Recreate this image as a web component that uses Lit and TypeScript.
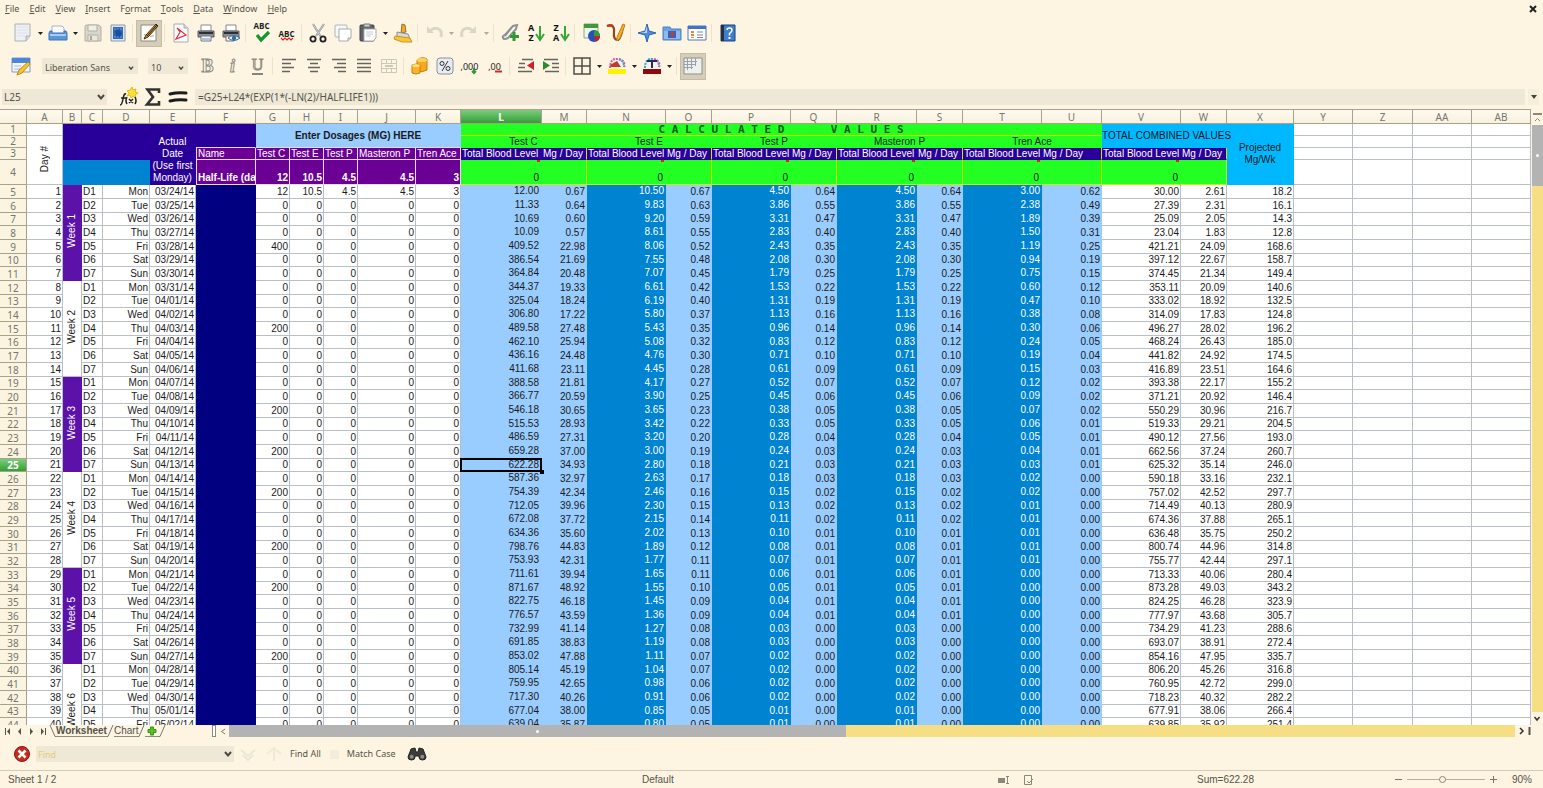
import { LitElement, html, css, svg, nothing, type TemplateResult } from "lit";
import { customElement, property } from "lit/decorators.js";
import { classMap } from "lit/directives/class-map.js";

/* ---------- icons (20 x 20 grid) ---------- */
const ICONS: Record<string, TemplateResult> = {
  newdoc: svg`<path d="M2 1h15v12l-4 5H2z" fill="#eef1f4" stroke="#a9b0b8"/><path d="M17 13h-4v5" fill="#cfd6dd" stroke="#a9b0b8"/><path d="M4 4h11M4 7h11M4 10h11M4 13h8" stroke="#dbe1e7"/>`,
  open: svg`<path d="M4 9V3h10l2 2v4" fill="#fff" stroke="#9fb4cc"/><path d="M2 8h2v2h12V8h2l1 2v7H1v-7z" fill="#5b95dc" stroke="#3c74bd"/><path d="M2 12h16" stroke="#a8cbf3" stroke-width="2"/>`,
  save: svg`<path d="M3 2h13l2 2v14H2V3z" fill="#d8d6cc" stroke="#b3b0a5"/><path d="M5 2h9v6H5z" fill="#efede4" stroke="#b3b0a5"/><path d="M5 12h10v6H5z" fill="#e8e6dd" stroke="#b3b0a5"/><path d="M7 13h2v4H7z" fill="#aaa79c"/>`,
  bluedoc: svg`<path d="M3 2h14v16H3z" fill="#dfe6ee" stroke="#8d98a8"/><path d="M5 4h10v12H5z" fill="#2f69bd"/><path d="M6 6h8M6 14h8" stroke="#6ea0e6" stroke-dasharray="2 1"/><path d="M7 8l4-2 3 4-2 4-4-1z" fill="#1e4f9e"/>`,
  edit: svg`<path d="M2 2h15v16H2z" fill="#fdfdf8" stroke="#8b8b80"/><path d="M5 11c2 3 3-2 5 1s3 0 5 1" fill="none" stroke="#999"/><path d="M17 1l2 2L9 14l-4 2 2-4z" fill="#d8961e" stroke="#3b2a10"/><path d="M18 2L8 13" stroke="#222"/>`,
  pdf: svg`<path d="M3 1h10l4 4v14H3z" fill="#fbfbfb" stroke="#aaa"/><path d="M13 1v4h4" fill="#ddd" stroke="#aaa"/><path d="M6 5l9 7-10 4 4-7z" fill="none" stroke="#e03040" stroke-width="1.200"/>`,
  print: svg`<path d="M5 2h10v6H5z" fill="#fff" stroke="#888"/><path d="M2 8h16v6H2z" fill="#8a9099" stroke="#555b63"/><path d="M3 10h14" stroke="#2c3036" stroke-width="2"/><path d="M5 13h10v5H5z" fill="#f5f7fb" stroke="#777"/><path d="M6 16h8" stroke="#5c8fd6"/>`,
  preview: svg`<path d="M5 2h10v6H5z" fill="#fff" stroke="#888"/><path d="M2 8h16v6H2z" fill="#8a9099" stroke="#555b63"/><path d="M3 10h14" stroke="#2c3036" stroke-width="2"/><path d="M5 13h8v5H5z" fill="#f5f7fb" stroke="#777"/><path d="M7 15q5-5 12 0q-6 5-12 0z" fill="#e4eef8" stroke="#39698f"/><circle cx="13" cy="15" r="2.2" fill="#2f6ea8"/>`,
  spell: svg`<path d="M5 12l4 5 8-8" fill="none" stroke="#18962f" stroke-width="3.2"/>`,
  autospell: svg`<path d="M4 15l2 2 2-2 2 2 2-2 2 2 2-2" fill="none" stroke="#e02020" stroke-width="1.2"/>`,
  cut: svg`<path d="M5 1l8 13M16 1L8 13" stroke="#8a8f96" stroke-width="2"/><path d="M5 1l8 13M16 1L8 13" stroke="#d9dde2" stroke-width=".8"/><circle cx="5" cy="16" r="2.6" fill="none" stroke="#222" stroke-width="1.8"/><circle cx="15" cy="16" r="2.6" fill="none" stroke="#222" stroke-width="1.8"/>`,
  copy: svg`<rect x="2" y="2" width="12" height="12" rx="1" fill="#f6f7f8" stroke="#b0b4b9"/><path d="M6 6h12v9l-3 3H6z" fill="#fff" stroke="#a7abb1"/><path d="M18 15h-3v3" fill="#ddd" stroke="#a7abb1"/>`,
  paste: svg`<rect x="2" y="2" width="14" height="16" rx="1" fill="#5d6168" stroke="#3e4147"/><path d="M6 1h6v3H6z" fill="#c9ccd1" stroke="#777"/><path d="M6 6h12v9l-3 3H6z" fill="#fff" stroke="#a7abb1"/><path d="M8 9h7M8 11h7M8 13h5" stroke="#c5c9ce"/>`,
  brush: svg`<path d="M9 1l3 1 1 7-5 1z" fill="#e6a93a" stroke="#a96f17"/><path d="M4 9l11 2 2 5-13-2z" fill="#d4d8df" stroke="#8a8f98"/><path d="M2 13l15 2 2 4H9L1 16z" fill="#f5c53b" stroke="#d29616"/>`,
  undo: svg`<path d="M3 3v7h7z" fill="#dad6c8"/><path d="M6 8q5-5 10-1 2 2 1 7" fill="none" stroke="#dad6c8" stroke-width="3"/>`,
  redo: svg`<path d="M17 3v7h-7z" fill="#dad6c8"/><path d="M14 8Q9 3 4 7q-2 2-1 7" fill="none" stroke="#dad6c8" stroke-width="3"/>`,
  link: svg`<path d="M5 13l8-10 4-1-1 4-8 9q-4 2-5 0t2-3l7-8" fill="none" stroke="#8c9198" stroke-width="2"/><path d="M14 9v9M10 13.500h9" stroke="#2f9a35" stroke-width="3"/>`,
  arrowdown: svg`<path d="M15 3v13M11 11l4 6 4-6" fill="none" stroke="#35a83b" stroke-width="2"/>`,
  chart: svg`<path d="M3 1h14v14H3z" fill="#eef6ea" stroke="#8ca886"/><path d="M3 1h14v4H3z" fill="#3e9a3a"/><circle cx="13" cy="13" r="6" fill="#2a50b8"/><path d="M13 13V7a6 6 0 0 1 6 6z" fill="#2f9e3b"/><path d="M13 13h6a6 6 0 0 1-4 5.600z" fill="#c8232b"/>`,
  draw: svg`<path d="M1 3q8-2 7 6t4 8q4-3 5-15" fill="none" stroke="#8f4a1c" stroke-width="2.200"/><path d="M17 1l2 1-5 13-3 3v-4z" fill="#f4b22f" stroke="#c77b12"/><path d="M1 3q4-2 6 0" stroke="#c43a1d" stroke-width="2" fill="none"/>`,
  navigator: svg`<path d="M10 1l2 7 7 2-7 2-2 7-2-7-7-2 7-2z" fill="#4c8fe0" stroke="#2a62b4"/><path d="M10 3v7H3l5-1z" fill="#b9d6f8"/>`,
  gallery: svg`<path d="M1 4h7l1 2h10v11H1z" fill="#6ba1e4" stroke="#4a80c8"/><path d="M2 8h16v8H2z" fill="#8dbaf0"/><path d="M6 8h8v7H6z" fill="#3f62a8"/><path d="M9 9h3v5H9z" fill="#b3404a"/>`,
  sources: svg`<path d="M1 3h18v14H1z" fill="#fdfdfd" stroke="#5379b8"/><path d="M1 3h18v3H1z" fill="#3f73c6"/><path d="M4 8h3v2H4zM4 11h3v2H4zM4 14h3v1H4z" fill="#e08c2c"/><path d="M10 9h6M10 12h6M10 14.500h6" stroke="#7a8ba8"/>`,
  help: svg`<path d="M3 2h14v16H3z" fill="#3f7fcf" stroke="#1d3f73"/><path d="M3 2h3v16H3z" fill="#26303e"/><path d="M9 7q0-2 2.500-2t2.500 2q0 2-2.500 3.500v2" fill="none" stroke="#fff" stroke-width="1.500"/><path d="M10.500 14h2v2h-2z" fill="#fff"/>`,
  styles: svg`<path d="M1 2h18v14H1z" fill="#f4f8fd" stroke="#7d9cc8"/><path d="M1 2h18v5H1z" fill="#4c86d8"/><path d="M3 10h7M3 13h6" stroke="#a9bad3"/><path d="M17 6l2 2-8 9-5 2 2-5z" fill="#f7c42c" stroke="#c58b10"/>`,
  alignl: svg`<path d="M3 3.500h14M3 7.500h9M3 11.500h12M3 15.500h8" stroke="#66645c" stroke-width="1.500"/>`,
  alignc: svg`<path d="M3 3.500h14M6 7.500h8M4 11.500h12M6 15.500h8" stroke="#66645c" stroke-width="1.500"/>`,
  alignr: svg`<path d="M3 3.500h14M8 7.500h9M5 11.500h12M9 15.500h8" stroke="#66645c" stroke-width="1.500"/>`,
  alignj: svg`<path d="M3 3.500h14M3 7.500h14M3 11.500h14M3 15.500h14" stroke="#66645c" stroke-width="1.500"/>`,
  merge: svg`<path d="M2.500 3.500h15v13h-15zM2.500 7.500h15M2.500 12.500h15M7.500 3.500v4M12.500 3.500v4M7.500 12.500v4M12.500 12.500v4" fill="none" stroke="#cbc7ba"/><path d="M6 10h8" stroke="#cbc7ba" stroke-width="2"/>`,
  coins: svg`<path d="M7 4q5-4 10-1v11q-5 3-10 1z" fill="#f5a91e" stroke="#c97c0c"/><ellipse cx="12" cy="4" rx="5" ry="2" fill="#ffd257"/><path d="M2 9q4-2 8 0v8q-4 2-8 0z" fill="#f8b52c" stroke="#c97c0c"/><ellipse cx="6" cy="9.500" rx="4" ry="1.600" fill="#ffdc74"/>`,
  percent: svg`<rect x="2" y="2" width="16" height="16" rx="3" fill="#e9ecf2" stroke="#8b909b"/><circle cx="7" cy="7.500" r="2" fill="none" stroke="#333"/><circle cx="13" cy="12.500" r="2" fill="none" stroke="#333"/><path d="M13 5L7 15" stroke="#333"/>`,
  adddec: svg`<path d="M14 12v5M12 15l2 2 2-2" stroke="#2f9a35" stroke-width="2" fill="none"/>`,
  remdec: svg`<path d="M10 15.500h7" stroke="#d02a2a" stroke-width="2"/>`,
  outdent: svg`<path d="M6 3.500h11M3 7.500h6M2 11.500h7M2 15.500h14" stroke="#66645c" stroke-width="1.500"/><path d="M18 5v9l-7-4.500z" fill="#cf2027"/>`,
  indent: svg`<path d="M3 3.500h14M11 7.500h7M11 11.500h7M4 15.500h14" stroke="#66645c" stroke-width="1.500"/><path d="M2 5v9l7-4.500z" fill="#2e8b32"/>`,
  borders: svg`<path d="M2 2h16v16H2zM10 2v16M2 10h16" fill="none" stroke="#4d4d48" stroke-width="1.500"/>`,
  bgcolor: svg`<path d="M3 12q0-10 8-9t6 9" fill="#f3f3ee" stroke="#e05a9b" stroke-width="2" stroke-dasharray="2 1"/><path d="M3 9l7-4 4 6H4z" fill="#c23a2a"/><path d="M12 3q5 2 5 8" fill="none" stroke="#3aa0d8" stroke-width="2" stroke-dasharray="2 1"/><path d="M1 13h18v5H1z" fill="#fff200"/>`,
  fontcolor: svg`<path d="M3 12q0-10 8-9t6 9" fill="#f3f3ee" stroke="#3aa0d8" stroke-width="2" stroke-dasharray="2 1"/><path d="M12 3q5 2 5 8" fill="none" stroke="#e05a9b" stroke-width="2" stroke-dasharray="2 1"/><path d="M5 5h10M10 5v7" stroke="#222e55" stroke-width="2"/><path d="M1 13h18v5H1z" fill="#8b0a10"/>`,
  gridlines: svg`<path d="M1 2h18v16H1z" fill="#eef0ee" stroke="#8d9090"/><path d="M1 5.500h13M1 8.500h12M1 11.500h9M4.500 2v12M8.500 2v11M12.500 2v8" stroke="#9aa0a6"/>`,
  fx: svg`<path d="M14 0l1 3 3-1-1 3 3 1-3 2 1 3-3-2-2 2-1-3-3 1 2-3-2-2 3-1z" fill="#ffdf3a" stroke="#e8b818"/><path d="M2 18q2 0 3-6t3-5M3 11h5M9 10q-2 4 0 7M11 12l4 4M15 12l-4 4M17 10q2 4 0 7" fill="none" stroke="#222" stroke-width="1.500"/>`,
  sigma: svg`<path d="M16 6V2.500H4.500L10 10l-6 7.500h12V14" fill="none" stroke="#333" stroke-width="2.600"/>`,
  equals: svg`<path d="M2 7q8-2 16-1M2 14q8-2 16-1" fill="none" stroke="#1c1c1c" stroke-width="3" stroke-linecap="round"/>`,
  closefind: svg`<circle cx="10" cy="10" r="7.500" fill="#c82a20" stroke="#8a1710"/><path d="M6.500 6.500l7 7M13.500 6.500l-7 7" stroke="#fff" stroke-width="2.600"/>`,
  finddown: svg`<path d="M3 6l7 6 7-6M5 11l5 5 5-5" fill="none" stroke="#ece6d5" stroke-width="2"/>`,
  findup: svg`<path d="M3 10l7-6 7 6M10 5v12" fill="none" stroke="#efe9d9" stroke-width="2"/>`,
  binoculars: svg`<path d="M4 5l4-1 1 4h2l1-4 4 1 3 8q0 3-3.500 3T12 13v-1H8v1q0 3-3.500 3T1 13z" fill="#3c3c3a" stroke="#222"/><circle cx="4.700" cy="12.800" r="2" fill="#8d8d88"/><circle cx="15.300" cy="12.800" r="2" fill="#8d8d88"/>`,
  chevron: svg`<path d="M7 8l3 3.500 3-3.500" fill="none" stroke="#4a483f" stroke-width="2"/>`,
};

const icon = (name: string) =>
  html`<svg viewBox="0 0 20 20" width="20" height="20" aria-hidden="true">${ICONS[name]}</svg>`;

const shared = css`
  * { box-sizing: border-box; }
  button {
    font: inherit; color: inherit; background: none; border: 0; padding: 0; margin: 0;
    display: flex; align-items: center; justify-content: center;
  }
  input, select { font: inherit; color: inherit; border: 0; margin: 0; border-radius: 0; outline: 0; min-width: 0; }
  svg { display: block; flex: none; }
`;

type Tool = [kind: "b" | "a" | "s" | "p" | "t", name?: string, label?: string];

/* ---------- toolbars ---------- */
@customElement("calc-toolbars")
class CalcToolbars extends LitElement {
  static styles = [
    shared,
    css`
      :host { display: block; }
      .menu { display: flex; gap: 10px; padding: 0 5px; height: 18px; align-items: center; font-size: 9px; }
      .menu u { text-underline-offset: 1px; }
      .menu .close { margin-left: auto; width: 10px; }
      .bar { display: flex; align-items: center; }
      .std { height: 30px; padding-left: 10px; }
      .fmt { height: 36px; padding-left: 8px; font-size: 9px; }
      .tool { width: 25px; height: 25px; position: relative; }
      .pressed { width: 26px; height: 27px; background: #d5cdb8; outline: 1px solid #c4bca6; outline-offset: -1px; }
      .arrow { width: 10px; height: 20px; }
      .dim { opacity: 0.35; }
      .sep { width: 1px; height: 18px; background: #ebe3cf; margin: 0 3px 0 2px; }
      .glyph { display: grid; justify-items: center; align-items: center; }
      .glyph > * { grid-area: 1 / 1; }
      .abc { font: bold 8px/9px "Open Sans", sans-serif; color: #222; align-self: start; }
      .abc.mid { align-self: center; }
      .az { font: bold 9px/10px "Open Sans", sans-serif; color: #111; justify-self: start; padding-left: 3px; width: 10px; }
      .dec { font: 9px/9px "Noto Sans", sans-serif; color: #222; align-self: center; }
      .letter { font: bold 18px/20px "Liberation Serif", serif; color: #fbf7ea; -webkit-text-stroke: 1px #8f8c80; }
      .letter.i { font-style: italic; }
      .letter.u { font-weight: normal; font-size: 16px; border-bottom: 2px solid #88867c; line-height: 16px; }
      .combo { display: grid; align-items: center; background: #efe8d6; height: 16px; }
      .combo > * { grid-area: 1 / 1; }
      .combo select { appearance: none; background: none; width: 100%; height: 16px; padding: 0 3px; }
      .combo svg { justify-self: end; pointer-events: none; width: 14px; }
      .font { width: 96px; margin-left: 9px; }
      .size { width: 40px; margin: 0 7px 0 10px; }
    `,
  ];

  private std: Tool[] = [
    ["b", "newdoc", "New"], ["a"], ["b", "open", "Open"], ["a"], ["b", "save", "Save"], ["b", "bluedoc", "Document"], ["s"],
    ["p", "edit", "Edit file"], ["s"], ["b", "pdf", "Export PDF"], ["b", "print", "Print"], ["b", "preview", "Preview"], ["s"],
    ["t", "spell", "Spelling"], ["t", "autospell", "Auto spellcheck"], ["s"], ["b", "cut", "Cut"], ["b", "copy", "Copy"],
    ["b", "paste", "Paste"], ["a"], ["b", "brush", "Clone formatting"], ["s"], ["b", "undo", "Undo"], ["a", "dim"],
    ["b", "redo", "Redo"], ["a", "dim"], ["s"], ["b", "link", "Hyperlink"], ["t", "az", "Sort ascending"], ["t", "za", "Sort descending"],
    ["s"], ["b", "chart", "Chart"], ["b", "draw", "Draw"], ["s"], ["b", "navigator", "Navigator"], ["b", "gallery", "Gallery"],
    ["b", "sources", "Data sources"], ["s"], ["b", "help", "Help"],
  ];
  private fmt: Tool[] = [
    ["t", "bold", "Bold"], ["t", "italic", "Italic"], ["t", "underline", "Underline"], ["s"],
    ["b", "alignl", "Align left"], ["b", "alignc", "Center"], ["b", "alignr", "Align right"], ["b", "alignj", "Justify"],
    ["b", "merge", "Merge cells"], ["s"], ["b", "coins", "Currency"], ["b", "percent", "Percent"], ["t", "adddec", "Add decimal"],
    ["t", "remdec", "Delete decimal"], ["s"], ["b", "outdent", "Decrease indent"], ["b", "indent", "Increase indent"], ["s"],
    ["b", "borders", "Borders"], ["a"], ["b", "bgcolor", "Background color"], ["a"], ["b", "fontcolor", "Font color"], ["a"], ["s"],
    ["p", "gridlines", "Grid lines"],
  ];

  private glyph(name: string) {
    switch (name) {
      case "spell": return html`<span class="abc">ABC</span>${icon("spell")}`;
      case "autospell": return html`<span class="abc mid">ABC</span>${icon("autospell")}`;
      case "az": return html`<span class="az">A Z</span>${icon("arrowdown")}`;
      case "za": return html`<span class="az">Z A</span>${icon("arrowdown")}`;
      case "bold": return html`<span class="letter">B</span>`;
      case "italic": return html`<span class="letter i">i</span>`;
      case "underline": return html`<span class="letter u">U</span>`;
      case "adddec": return html`<span class="dec">,000</span>${icon("adddec")}`;
      default: return html`<span class="dec">,00</span>${icon("remdec")}`;
    }
  }

  private tool([kind, name = "", label = ""]: Tool) {
    if (kind === "s") return html`<span class="sep"></span>`;
    if (kind === "a")
      return html`<button class=${classMap({ arrow: true, dim: name === "dim" })} aria-label="More">
        <svg width="5" height="3" viewBox="0 0 5 3"><path d="M0 0h5L2.500 3z" fill="#222" /></svg>
      </button>`;
    if (kind === "t") return html`<button class="tool glyph" aria-label=${label}>${this.glyph(name)}</button>`;
    return html`<button class=${classMap({ tool: true, pressed: kind === "p" })} aria-label=${label}>${icon(name)}</button>`;
  }

  render() {
    const menu = [["", "F", "ile"], ["", "E", "dit"], ["", "V", "iew"], ["", "I", "nsert"], ["F", "o", "rmat"], ["", "T", "ools"], ["", "D", "ata"], ["", "W", "indow"], ["", "H", "elp"]];
    return html`
      <nav class="menu">
        ${menu.map(([a, b, c]) => html`<button>${a}<u>${b}</u>${c}</button>`)}
        <button class="close" aria-label="Close document">
          <svg width="8" height="8" viewBox="0 0 8 8"><path d="M1 1l6 6M7 1L1 7" stroke="#222" stroke-width="2" /></svg>
        </button>
      </nav>
      <div class="bar std">${this.std.map((t) => this.tool(t))}</div>
      <div class="bar fmt">
        ${this.tool(["b", "styles", "Styles"])}
        <div class="combo font"><select aria-label="Font name"><option>Liberation Sans</option></select>${icon("chevron")}</div>
        <div class="combo size"><select aria-label="Font size"><option>10</option></select>${icon("chevron")}</div>
        ${this.fmt.map((t) => this.tool(t))}
      </div>
    `;
  }
}

/* ---------- sheet data ---------- */
const COLS: [string, number][] = [
  ["A", 36], ["B", 19], ["C", 21], ["D", 47], ["E", 46], ["F", 60], ["G", 34], ["H", 34], ["I", 34], ["J", 58], ["K", 45],
  ["L", 81], ["M", 45], ["N", 79], ["O", 46], ["P", 79], ["Q", 46], ["R", 80], ["S", 46], ["T", 79], ["U", 60], ["V", 79],
  ["W", 46], ["X", 67], ["Y", 59], ["Z", 60], ["AA", 59], ["AB", 0],
];

/* L M N O P/R Q/S T U V W X */
const VALUES = `12.00 0.67 10.50 0.67 4.50 0.64 3.00 0.62 30.00 2.61 18.2
11.33 0.64 9.83 0.63 3.86 0.55 2.38 0.49 27.39 2.31 16.1
10.69 0.60 9.20 0.59 3.31 0.47 1.89 0.39 25.09 2.05 14.3
10.09 0.57 8.61 0.55 2.83 0.40 1.50 0.31 23.04 1.83 12.8
409.52 22.98 8.06 0.52 2.43 0.35 1.19 0.25 421.21 24.09 168.6
386.54 21.69 7.55 0.48 2.08 0.30 0.94 0.19 397.12 22.67 158.7
364.84 20.48 7.07 0.45 1.79 0.25 0.75 0.15 374.45 21.34 149.4
344.37 19.33 6.61 0.42 1.53 0.22 0.60 0.12 353.11 20.09 140.6
325.04 18.24 6.19 0.40 1.31 0.19 0.47 0.10 333.02 18.92 132.5
306.80 17.22 5.80 0.37 1.13 0.16 0.38 0.08 314.09 17.83 124.8
489.58 27.48 5.43 0.35 0.96 0.14 0.30 0.06 496.27 28.02 196.2
462.10 25.94 5.08 0.32 0.83 0.12 0.24 0.05 468.24 26.43 185.0
436.16 24.48 4.76 0.30 0.71 0.10 0.19 0.04 441.82 24.92 174.5
411.68 23.11 4.45 0.28 0.61 0.09 0.15 0.03 416.89 23.51 164.6
388.58 21.81 4.17 0.27 0.52 0.07 0.12 0.02 393.38 22.17 155.2
366.77 20.59 3.90 0.25 0.45 0.06 0.09 0.02 371.21 20.92 146.4
546.18 30.65 3.65 0.23 0.38 0.05 0.07 0.02 550.29 30.96 216.7
515.53 28.93 3.42 0.22 0.33 0.05 0.06 0.01 519.33 29.21 204.5
486.59 27.31 3.20 0.20 0.28 0.04 0.05 0.01 490.12 27.56 193.0
659.28 37.00 3.00 0.19 0.24 0.03 0.04 0.01 662.56 37.24 260.7
622.28 34.93 2.80 0.18 0.21 0.03 0.03 0.01 625.32 35.14 246.0
587.36 32.97 2.63 0.17 0.18 0.03 0.02 0.00 590.18 33.16 232.1
754.39 42.34 2.46 0.16 0.15 0.02 0.02 0.00 757.02 42.52 297.7
712.05 39.96 2.30 0.15 0.13 0.02 0.01 0.00 714.49 40.13 280.9
672.08 37.72 2.15 0.14 0.11 0.02 0.01 0.00 674.36 37.88 265.1
634.36 35.60 2.02 0.13 0.10 0.01 0.01 0.00 636.48 35.75 250.2
798.76 44.83 1.89 0.12 0.08 0.01 0.01 0.00 800.74 44.96 314.8
753.93 42.31 1.77 0.11 0.07 0.01 0.01 0.00 755.77 42.44 297.1
711.61 39.94 1.65 0.11 0.06 0.01 0.00 0.00 713.33 40.06 280.4
871.67 48.92 1.55 0.10 0.05 0.01 0.00 0.00 873.28 49.03 343.2
822.75 46.18 1.45 0.09 0.04 0.01 0.00 0.00 824.25 46.28 323.9
776.57 43.59 1.36 0.09 0.04 0.01 0.00 0.00 777.97 43.68 305.7
732.99 41.14 1.27 0.08 0.03 0.00 0.00 0.00 734.29 41.23 288.6
691.85 38.83 1.19 0.08 0.03 0.00 0.00 0.00 693.07 38.91 272.4
853.02 47.88 1.11 0.07 0.02 0.00 0.00 0.00 854.16 47.95 335.7
805.14 45.19 1.04 0.07 0.02 0.00 0.00 0.00 806.20 45.26 316.8
759.95 42.65 0.98 0.06 0.02 0.00 0.00 0.00 760.95 42.72 299.0
717.30 40.26 0.91 0.06 0.02 0.00 0.00 0.00 718.23 40.32 282.2
677.04 38.00 0.85 0.05 0.01 0.00 0.00 0.00 677.91 38.06 266.4
639.04 35.87 0.80 0.05 0.01 0.00 0.00 0.00 639.85 35.92 251.4
603.17 33.85 0.75 0.05 0.01 0.00 0.00 0.00 603.93 33.90 237.3
569.31 31.95 0.70 0.04 0.01 0.00 0.00 0.00 570.02 32.00 224.0`
  .split("\n")
  .map((line) => line.split(" "));

const DOSES: Record<number, string> = { 9: "400", 15: "200", 21: "200", 24: "200", 27: "200", 31: "200", 34: "200", 39: "200" };
const DAYS = ["Mon", "Tue", "Wed", "Thu", "Fri", "Sat", "Sun"];

const dateOf = (i: number) => {
  const d = new Date(Date.UTC(2014, 2, 24 + i));
  const two = (n: number) => String(n).padStart(2, "0");
  return `${two(d.getUTCMonth() + 1)}/${two(d.getUTCDate())}/14`;
};

/* ---------- sheet ---------- */
@customElement("calc-sheet")
class CalcSheet extends LitElement {
  @property() active = "L25";

  static styles = [
    shared,
    css`
      :host { display: flex; flex: 1; min-height: 0; background: #fff; }
      .view { flex: 1; min-width: 0; overflow: hidden; }
      table {
        table-layout: fixed; border-spacing: 0; width: 100%; min-width: 1531px;
        font: 10px/12px "Liberation Sans", Arial, sans-serif; color: #1a1a1a;
      }
      th, td {
        padding: 0 1px; border: solid #b9bfc4; border-width: 0 1px 1px 0;
        white-space: nowrap; text-align: right; vertical-align: bottom; font-weight: normal;
      }
      tbody tr { height: 14px; }
      tbody tr:nth-child(3n) { height: 13px; }
      .cols th { height: 15px; line-height: 12px; text-align: center; vertical-align: middle; background: linear-gradient(#fffaf0, #f8f1de); border-color: #a9a28a; border-top-width: 1px; }
      .cols th, .row { font-family: "Noto Sans", sans-serif; color: #77756c; }
      .row { text-align: center; background: #fbf4e1; border-color: #a9a28a; }
      .cols th.on, .row.on { background: linear-gradient(#7fcb80, #31a033); color: #fff; font-weight: bold; }
      .r12 { height: 12px; line-height: 11px; }
      .r25 { height: 25px; }
      .c { text-align: center; }
      .l { text-align: left; }
      .m { vertical-align: middle; }
      .dark { background: #280099; color: #fff; border-color: transparent; }
      .wrap { white-space: normal; line-height: 12px; text-align: center; }
      .blue { background: #0084d1; color: #fff; border-color: transparent; }
      .sky { background: #99ccff; border-color: transparent; }
      .navy { background: #000080; border-color: transparent; }
      .cyan { background: #00b8ff; border-color: transparent; }
      .full { padding: 0; border-right-width: 0; }
      .green { background: #23ff23; border-color: transparent; }
      .purple { background: #6b0094; color: #fff; border-color: #e8d8f0; }
      .edge { border-left: 1px solid #e8d8f0; overflow: hidden; }
      .under { border-bottom-color: #e8d8f0; }
      .yr { border-right-color: #c8e800; }
      .yb { border-bottom-color: #c8f000; }
      .b { font-weight: bold; }
      .week { background: #5c11a8; color: #fff; border-color: transparent; }
      .side { writing-mode: vertical-rl; transform: rotate(180deg); display: inline-block; line-height: 12px; }
      .top { vertical-align: top; }
      .pad { padding-right: 2px; }
      .mono { font: bold 11px/11px "DejaVu Sans Mono", monospace; white-space: pre; text-align: center; color: #0c5a1c; }
      .note { position: relative; }
      .note::after { content: ""; position: absolute; right: 1px; top: 0; width: 3px; height: 2px; background: #e02010; }
      .cell { position: relative; }
      .cursor { position: absolute; inset: -1px; border: 2px solid #000; }
      .cursor::after { content: ""; position: absolute; right: -4px; bottom: -4px; width: 4px; height: 4px; background: #000; }
      .vbar { width: 12px; display: flex; flex-direction: column; background: #fdf5e2; }
      .cap { height: 16px; justify-content: flex-end; flex-direction: column; gap: 3px; padding-bottom: 3px; width: 12px; }
      .track { flex: 1; background: #f6de85; border-left: 1px solid #fdf5e2; }
      .thumb { height: 61px; background: #b3b3b3; display: grid; place-items: center; }
      .dot { width: 3px; height: 3px; background: #fff; border-radius: 50%; }
      .foot { height: 13px; width: 12px; }
    `,
  ];

  private row(v: string[], i: number) {
    const n = i + 5;
    const on = this.active === `L${n}`;
    const week = Math.floor(i / 7) + 1;
    const opening = i === 0 ? ["12", "10.5", "4.5", "4.5", "3"] : [DOSES[n] ?? "0", "0", "0", "0", "0"];
    const [l, m, nn, o, p, q, t, u, vv, w, x] = v;
    return html`<tr>
      <th class=${classMap({ row: true, on })} scope="row">${n}</th>
      <td>${i + 1}</td>
      ${i % 7 === 0
        ? html`<td class=${classMap({ c: true, m: true, week: week % 2 === 1 })} rowspan="7"><span class="side">Week ${week}</span></td>`
        : nothing}
      <td class="l">D${(i % 7) + 1}</td>
      <td>${DAYS[i % 7]}</td>
      <td>${dateOf(i)}</td>
      <td class="navy"></td>
      ${opening.map((d) => html`<td>${d}</td>`)}
      <td class=${classMap({ sky: true, top: true, pad: true, cell: on })}>${l}${on ? html`<span class="cursor"></span>` : nothing}</td>
      <td class="sky">${m}</td>
      <td class="blue top">${nn}</td><td class="sky">${o}</td>
      <td class="blue top">${p}</td><td class="sky">${q}</td>
      <td class="blue top">${p}</td><td class="sky">${q}</td>
      <td class="blue top">${t}</td><td class="sky">${u}</td>
      <td>${vv}</td><td>${w}</td><td>${x}</td>
      <td></td><td></td><td></td><td></td>
    </tr>`;
  }

  render() {
    const blank = html`<td></td><td></td><td></td><td></td>`;
    const col = this.active.replace(/\d+/, "");
    const groups = [0, 1, 2, 3, 4, 5];
    return html`
      <div class="view">
        <table>
          <colgroup>
            <col style="width:27px" />
            ${COLS.map(([, w]) => (w ? html`<col style="width:${w}px" />` : html`<col />`))}
          </colgroup>
          <thead>
            <tr class="cols">
              <th></th>
              ${COLS.map(([c]) => html`<th scope="col" class=${classMap({ on: c === col })}>${c}</th>`)}
            </tr>
            <tr class="r12">
              <th class="row" scope="row">1</th>
              <td></td>
              <td class="dark" colspan="3" rowspan="3"></td>
              <td class="dark wrap" rowspan="4">Actual Date (Use first Monday)</td>
              <td class="dark under" rowspan="2"></td>
              <td class="sky b c m under" colspan="5" rowspan="2">Enter Dosages (MG) HERE</td>
              <td class="green mono yb" colspan="10">C A L C U L A T E D       V A L U E S</td>
              <td class="cyan c m full" colspan="2" rowspan="2">TOTAL COMBINED VALUES</td>
              <td class="cyan wrap m" rowspan="4">Projected Mg/Wk</td>
              ${blank}
            </tr>
            <tr class="r12">
              <th class="row" scope="row">2</th>
              <td class="c m" rowspan="3"><span class="side">Day #</span></td>
              ${["Test C", "Test E", "Test P", "Masteron P", "Tren Ace"].map((t) => html`<td class="green c" colspan="2">${t}</td>`)}
              ${blank}
            </tr>
            <tr class="r12">
              <th class="row" scope="row">3</th>
              <td class="purple edge l">Name</td>
              ${["Test C", "Test E", "Test P", "Masteron P", "Tren Ace"].map((t) => html`<td class="purple l">${t}</td>`)}
              ${groups.map(() => html`<td class="dark l">Total Blood Level</td><td class="dark l yr">Mg / Day</td>`)}
              ${blank}
            </tr>
            <tr class="r25">
              <th class="row m" scope="row">4</th>
              <td class="blue" colspan="3"></td>
              <td class="purple edge l b">Half-Life (da</td>
              ${["12", "10.5", "4.5", "4.5", "3"].map((t) => html`<td class="purple b">${t}</td>`)}
              ${groups.map(() => html`<td class="green yb pad note">0</td><td class="green yb yr"></td>`)}
              ${blank}
            </tr>
          </thead>
          <tbody>
            ${VALUES.map((v, i) => this.row(v, i))}
          </tbody>
        </table>
      </div>
      <div class="vbar">
        <button class="cap" aria-label="Scroll up">
          <svg width="10" height="9" viewBox="0 0 10 9"><path d="M1 1h9" stroke="#8a877b" stroke-width="2" /><path d="M3 8l2.500-2.500L8 8" fill="none" stroke="#8a877b" /></svg>
        </button>
        <div class="track"><div class="thumb"><span class="dot"></span></div></div>
        <button class="foot" aria-label="Scroll down">
          <svg width="8" height="6" viewBox="0 0 8 6"><path d="M1.500 1L4 4l2.500-3" fill="none" stroke="#333" stroke-width="1.500" /></svg>
        </button>
      </div>
    `;
  }
}

/* ---------- application ---------- */
@customElement("app-root")
class AppRoot extends LitElement {
  static styles = [
    shared,
    css`
      :host {
        display: flex; flex-direction: column; height: 100vh; background: #fdf5e2; color: #55534a;
        font: 10px/12px "Noto Sans", sans-serif;
      }
      .formula { display: flex; align-items: center; height: 25px; padding: 0 4px 0 2px; }
      .field { display: flex; align-items: center; background: #efe8d6; height: 16px; }
      .field input { flex: 1; background: none; height: 16px; padding: 0 2px; }
      .field button { width: 12px; }
      .namebox { width: 105px; margin-right: 8px; }
      .tool { width: 25px; height: 22px; }
      .expr { flex: 1; background: #efe8d6; height: 16px; margin: 0 3px 0 5px; padding: 0 3px; }
      .drop { width: 11px; height: 16px; background: #f5eedb; }
      .tabs { display: flex; height: 13px; font: 10px/12px "Liberation Sans", Arial, sans-serif; }
      .nav { width: 12px; }
      .slant { width: 7px; height: 12px; }
      .tab { height: 12px; border-bottom: 1px solid #8d8a7e; background: #fbf4e0; }
      .tab.cur { font-weight: bold; }
      .tab.add { padding: 0 2px; }
      .split { width: 4px; height: 12px; border: 1px solid #8d8a7e; margin-left: auto; background: #fff; }
      .tabset { display: flex; width: 216px; padding-left: 1px; }
      .hbar { flex: 1; display: flex; align-items: stretch; }
      .arrow { width: 13px; height: 12px; }
      .track { flex: 1; display: flex; height: 12px; background: #f6de85; }
      .thumb { flex: 0 0 48%; background: #b3b3b3; display: grid; place-items: center; }
      .dot { width: 3px; height: 3px; background: #fff; border-radius: 50%; }
      .end { width: 15px; height: 12px; }
      .find { display: flex; align-items: center; height: 32px; padding-left: 12px; font-size: 9px; }
      .query { width: 198px; margin: 0 4px; }
      .query input::placeholder { color: #e3cc78; opacity: 1; }
      .iconbtn { width: 20px; height: 20px; }
      .gap { margin-right: 6px; }
      .match { display: flex; align-items: center; gap: 8px; margin: 0 11px 0 9px; }
      .match input { appearance: none; width: 9px; height: 9px; background: #f3ecda; }
      .status {
        display: grid; grid-template-columns: 634fr 356fr 199fr 335fr; align-items: center; height: 18px; padding: 0 11px 0 8px;
        border-top: 1px solid #d2cbb8; font-family: "Liberation Sans", Arial, sans-serif;
      }
      .status > * { display: flex; align-items: center; }
      .marks { gap: 14px; }
      .last { justify-content: space-between; }
      .zoom { display: flex; align-items: center; gap: 5px; }
      .zoom input { appearance: none; width: 78px; height: 12px; background: linear-gradient(#b5b0a2, #b5b0a2) center / 100% 1px no-repeat; }
      .zoom input::-webkit-slider-thumb { appearance: none; width: 7px; height: 7px; border: 1px solid #8a877b; border-radius: 50%; background: #fdf5e2; }
      .pct { margin-left: 10px; }
    `,
  ];

  private slant(d: string) {
    return html`<svg class="slant" viewBox="0 0 7 12"><path d=${d} fill="none" stroke="#77756c" /></svg>`;
  }
  private mini(d: string) {
    return html`<button class="nav" aria-label="Sheet navigation"><svg width="7" height="7" viewBox="0 0 7 7"><path d=${d} fill="#55534a" /></svg></button>`;
  }

  render() {
    return html`
      <calc-toolbars></calc-toolbars>
      <div class="formula">
        <div class="field namebox"><input aria-label="Name box" value="L25" /><button aria-label="Names">${icon("chevron")}</button></div>
        <button class="tool" aria-label="Function wizard">${icon("fx")}</button>
        <button class="tool" aria-label="Sum">${icon("sigma")}</button>
        <button class="tool" aria-label="Function">${icon("equals")}</button>
        <input class="expr" aria-label="Formula" value="=G25+L24*(EXP(1*(-LN(2)/HALFLIFE1)))" />
        <button class="drop" aria-label="Expand formula bar"><svg width="6" height="4" viewBox="0 0 6 4"><path d="M0 0h6L3 4z" fill="#44423a" /></svg></button>
      </div>
      <calc-sheet></calc-sheet>
      <div class="tabs">
        <div class="tabset">
          ${this.mini("M1 0h1v7H1zM6 0v7L3 3.500z")}${this.mini("M5 0v7L2 3.500z")}${this.mini("M2 0v7l3-3.500z")}${this.mini("M1 0v7l3-3.500zM5 0h1v7H5z")}
          ${this.slant("M1 0l5 11.500h1")}
          <button class="tab cur">Worksheet</button>
          ${this.slant("M0 11.500h1L6 0")}
          <button class="tab">Chart</button>
          ${this.slant("M0 11.500h1L6 0")}
          <button class="tab add" aria-label="Add sheet"><svg width="10" height="10" viewBox="0 0 10 10"><path d="M3.500 1h3v2.500H9v3H6.500V9h-3V6.500H1v-3h2.500z" fill="#5bbf2a" stroke="#3b8f17" /></svg></button>
          ${this.slant("M0 11.500h1L6 0")}
          <span class="split"></span>
        </div>
        <div class="hbar">
          <button class="arrow" aria-label="Scroll left"><svg width="6" height="7" viewBox="0 0 6 7"><path d="M5 1L1.500 3.500 5 6" fill="none" stroke="#77756c" /></svg></button>
          <div class="track"><div class="thumb"><span class="dot"></span></div></div>
          <button class="arrow" aria-label="Scroll right"><svg width="6" height="8" viewBox="0 0 6 8"><path d="M1 1l3 3-3 3" fill="none" stroke="#333" stroke-width="1.500" /></svg></button>
          <svg class="end" viewBox="0 0 15 12"><path d="M1.500 2v8" stroke="#55534a" stroke-width="2" /></svg>
        </div>
      </div>
      <div class="find">
        <button class="iconbtn" aria-label="Close find bar">${icon("closefind")}</button>
        <div class="field query"><input aria-label="Find" placeholder="Find" /><button aria-label="History">${icon("chevron")}</button></div>
        <button class="iconbtn gap" aria-label="Find next">${icon("finddown")}</button>
        <button class="iconbtn gap" aria-label="Find previous">${icon("findup")}</button>
        <button>Find All</button>
        <label class="match"><input type="checkbox" />Match Case</label>
        <button class="iconbtn" aria-label="Find and replace">${icon("binoculars")}</button>
      </div>
      <footer class="status">
        <span>Sheet 1 / 2</span>
        <span>Default</span>
        <span class="marks">
          <svg width="12" height="8" viewBox="0 0 12 8"><path d="M0 2h7v5H0z" fill="#8a877b" /><path d="M8 .500h3M9.500 0v8M8 7.500h3" stroke="#8a877b" /></svg>
          <svg width="9" height="10" viewBox="0 0 9 10"><path d="M.500.500h7v9h-7z" fill="none" stroke="#8a877b" /><path d="M3 6l2 2 4-4" fill="none" stroke="#8a877b" /></svg>
        </span>
        <span class="last">
          <span>Sum=622.28</span>
          <span class="zoom">
            <button aria-label="Zoom out"><svg width="7" height="7" viewBox="0 0 7 7"><path d="M0 3.500h7" stroke="#77756c" /></svg></button>
            <input type="range" aria-label="Zoom" min="20" max="160" value="84" />
            <button aria-label="Zoom in"><svg width="7" height="7" viewBox="0 0 7 7"><path d="M0 3.500h7M3.500 0v7" stroke="#77756c" /></svg></button>
            <span class="pct">90%</span>
          </span>
        </span>
      </footer>
    `;
  }
}
